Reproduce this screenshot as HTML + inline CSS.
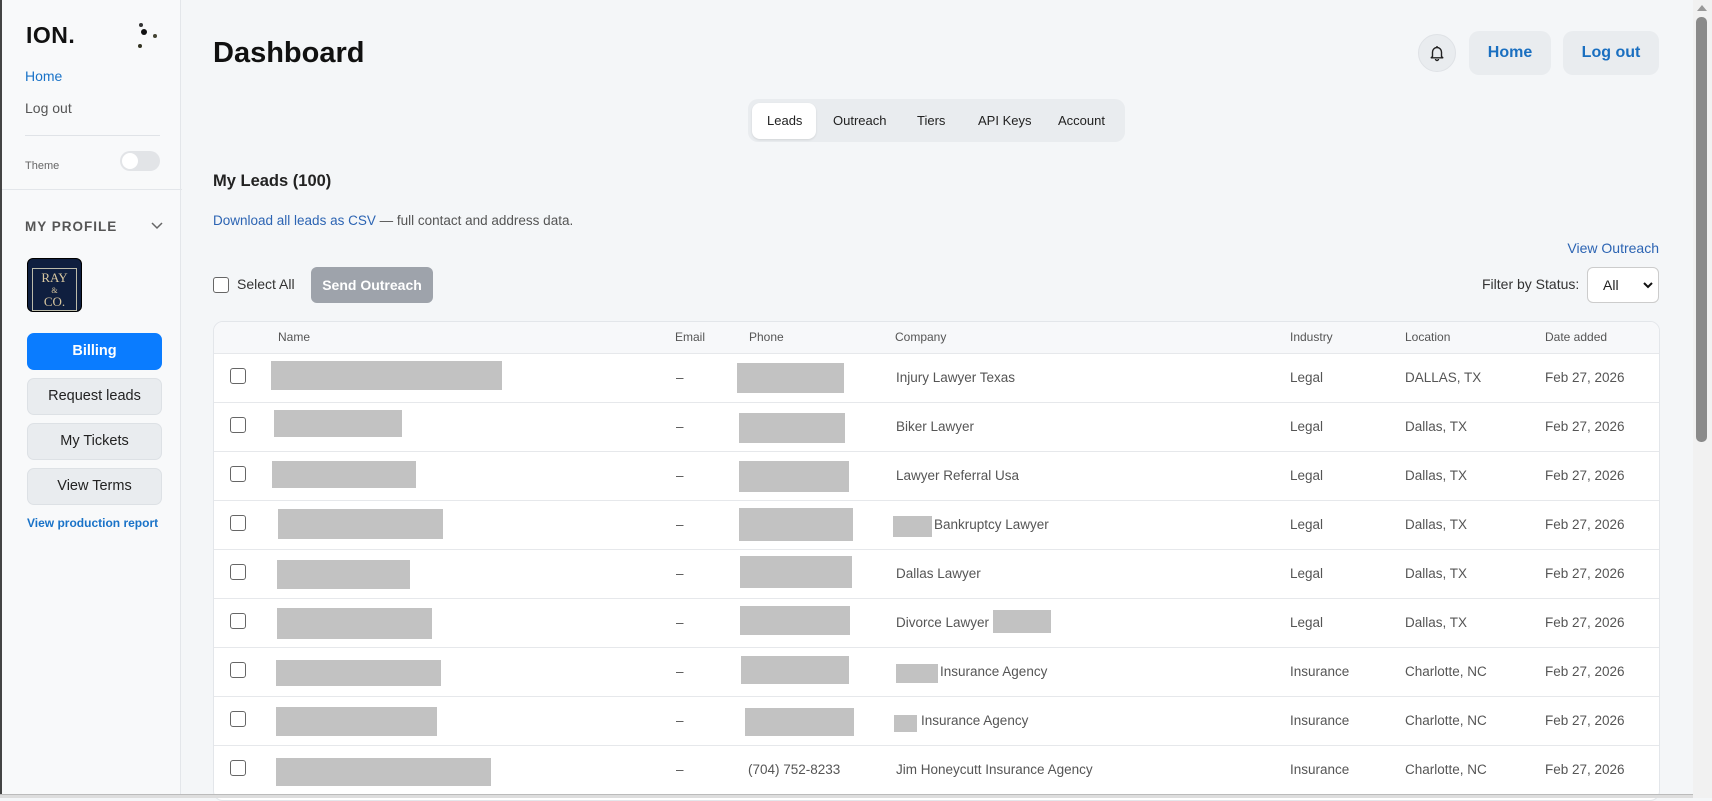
<!DOCTYPE html>
<html><head><meta charset="utf-8"><style>
*{box-sizing:border-box;margin:0;padding:0}
body{width:1712px;height:798px;overflow:hidden;background:#f4f6f8;font-family:"Liberation Sans",sans-serif;position:relative;color:#222}
.a{position:absolute}
.side{left:0;top:0;width:181px;height:798px;background:#f8f9fa;border-right:1px solid #e3e6ea;border-left:2px solid #444}
.sbtn{left:25px;width:135px;height:37px;border-radius:7px;background:#e9ecef;border:1px solid #dde1e5;font-size:14.5px;text-align:center;line-height:35px;color:#222}
.th{top:321px;font-size:12px;color:#555;line-height:33px}
.row{left:214px;width:1445px;height:49px;border-top:1px solid #e6e8eb}
.g{background:#c2c2c2}
.cb{width:16px;height:16px;border:1.5px solid #666;border-radius:3px;background:#fff}
.t{font-size:13.5px;color:#555}
</style></head><body>
<div class="a side">
  <div class="a" style="left:24px;top:22px;font-size:23px;font-weight:900;color:#111;letter-spacing:0.5px">ION.</div>
  <svg class="a" style="left:130px;top:22px" width="32" height="28"><circle cx="9" cy="3" r="2" fill="#333"/><circle cx="12" cy="10" r="3" fill="#111"/><circle cx="23" cy="14" r="2" fill="#443"/><circle cx="8" cy="24" r="2" fill="#332"/></svg>
  <div class="a" style="left:23px;top:68px;font-size:14px;color:#1a73c8">Home</div>
  <div class="a" style="left:23px;top:100px;font-size:14px;color:#555">Log out</div>
  <div class="a" style="left:23px;top:135px;width:135px;height:1px;background:#e0e3e7"></div>
  <div class="a" style="left:23px;top:160px;font-size:11px;color:#666">Theme</div>
  <div class="a" style="left:118px;top:151px;width:40px;height:20px;border-radius:10px;background:#e2e4e7"><div class="a" style="left:2px;top:2px;width:16px;height:16px;border-radius:8px;background:#fff"></div></div>
  <div class="a" style="left:0;top:189px;width:180px;height:1px;background:#e3e6ea"></div>
  <div class="a" style="left:23px;top:219px;font-size:13.5px;font-weight:bold;color:#555;letter-spacing:1px">MY PROFILE</div>
  <svg class="a" style="left:149px;top:222px" width="12" height="8"><path d="M1 1l5 5 5-5" stroke="#666" stroke-width="1.5" fill="none"/></svg>
  <div class="a" style="left:25px;top:258px;width:55px;height:54px;background:#0f1f3f;border-radius:6px;border:1px solid #000;color:#d9c8a0;font-family:'Liberation Serif',serif;font-size:13px;line-height:11px;text-align:center;padding-top:9px"><div style="border:1px solid #bba;margin:0 4px;padding:3px 0">RAY<br><span style="font-size:8px">&amp;</span><br>CO.</div></div>
  <div class="a sbtn" style="top:333px;background:#0a7cff;border-color:#0a7cff;color:#fff;font-weight:bold">Billing</div>
  <div class="a sbtn" style="top:378px">Request leads</div>
  <div class="a sbtn" style="top:423px">My Tickets</div>
  <div class="a sbtn" style="top:468px">View Terms</div>
  <div class="a" style="left:25px;top:516px;font-size:12px;color:#1a73c8;font-weight:bold">View production report</div>
</div>
<div class="a" style="left:213px;top:37px;font-size:29px;font-weight:bold;color:#111">Dashboard</div>
<div class="a" style="left:1418px;top:34px;width:38px;height:38px;border-radius:19px;background:#e9ecef;border:1px solid #dfe2e6"></div>
<svg class="a" style="left:1428px;top:44px" width="18" height="18" viewBox="0 0 18 18"><path d="M4.5 12.5V8a4.5 4.5 0 0 1 9 0v4.5l1.3 1.3H3.2z M7.5 15a1.5 1.5 0 0 0 3 0" stroke="#222" stroke-width="1.4" fill="none" stroke-linejoin="round"/><path d="M9 2v1.5" stroke="#222" stroke-width="1.4"/></svg>
<div class="a" style="left:1469px;top:31px;width:82px;height:44px;border-radius:10px;background:#e9ecef;color:#1a6fc0;font-size:16px;font-weight:bold;text-align:center;line-height:44px">Home</div>
<div class="a" style="left:1563px;top:31px;width:96px;height:44px;border-radius:10px;background:#e9ecef;color:#1a6fc0;font-size:16px;font-weight:bold;text-align:center;line-height:44px">Log out</div>
<div class="a" style="left:748px;top:99px;width:377px;height:43px;border-radius:10px;background:#e9ecef"></div>
<div class="a" style="left:752px;top:103px;width:64px;height:36px;border-radius:8px;background:#fff;box-shadow:0 1px 2px rgba(0,0,0,.1)"></div>
<div class="a" style="top:113px;font-size:13px;color:#222;left:767px">Leads</div>
<div class="a" style="top:113px;font-size:13px;color:#222;left:833px">Outreach</div>
<div class="a" style="top:113px;font-size:13px;color:#222;left:917px">Tiers</div>
<div class="a" style="top:113px;font-size:13px;color:#222;left:978px">API Keys</div>
<div class="a" style="top:113px;font-size:13px;color:#222;left:1058px">Account</div>
<div class="a" style="left:213px;top:172px;font-size:16.5px;font-weight:bold;color:#222">My Leads (100)</div>
<div class="a" style="left:213px;top:213px;font-size:13.5px;color:#555"><span style="color:#2c64b3">Download all leads as CSV</span> — full contact and address data.</div>
<div class="a" style="left:1500px;top:240px;width:159px;text-align:right;font-size:14px;color:#2c64b3">View Outreach</div>
<div class="a cb" style="left:213px;top:277px"></div>
<div class="a" style="left:237px;top:276px;font-size:14px;color:#333">Select All</div>
<div class="a" style="left:311px;top:267px;width:122px;height:36px;border-radius:6px;background:#9ea3ab;color:#fff;font-size:14px;font-weight:bold;text-align:center;line-height:36px">Send Outreach</div>
<div class="a" style="left:1482px;top:276px;font-size:14px;color:#333">Filter by Status:</div>
<div class="a" style="left:1587px;top:267px;width:72px;height:36px;border-radius:6px;background:#fff;border:1px solid #ccc;font-size:14px;line-height:34px;padding-left:15px">All<svg class="a" style="left:55px;top:14px" width="10" height="7"><path d="M1 1l4 4 4-4" stroke="#111" stroke-width="2" fill="none"/></svg></div>
<div class="a" style="left:213px;top:321px;width:1447px;height:480px;background:#fff;border:1px solid #e3e6ea;border-radius:10px;overflow:hidden">
 <div style="height:32px;background:#f7f8fa"></div>
</div>
<div class="a th" style="left:278px">Name</div><div class="a th" style="left:675px">Email</div><div class="a th" style="left:749px">Phone</div><div class="a th" style="left:895px">Company</div><div class="a th" style="left:1290px">Industry</div><div class="a th" style="left:1405px">Location</div><div class="a th" style="left:1545px">Date added</div>

<div class="a row" style="top:353px"></div><div class="a row" style="top:402px"></div><div class="a row" style="top:451px"></div><div class="a row" style="top:500px"></div><div class="a row" style="top:549px"></div><div class="a row" style="top:598px"></div><div class="a row" style="top:647px"></div><div class="a row" style="top:696px"></div><div class="a row" style="top:745px"></div>

<div class="a cb" style="left:230px;top:368px"></div><div class="a cb" style="left:230px;top:417px"></div><div class="a cb" style="left:230px;top:466px"></div><div class="a cb" style="left:230px;top:515px"></div><div class="a cb" style="left:230px;top:564px"></div><div class="a cb" style="left:230px;top:613px"></div><div class="a cb" style="left:230px;top:662px"></div><div class="a cb" style="left:230px;top:711px"></div><div class="a cb" style="left:230px;top:760px"></div>
<div class="a g" style="left:271px;top:361px;width:231px;height:29px"></div>
<div class="a g" style="left:274px;top:410px;width:128px;height:27px"></div>
<div class="a g" style="left:272px;top:461px;width:144px;height:27px"></div>
<div class="a g" style="left:278px;top:509px;width:165px;height:30px"></div>
<div class="a g" style="left:277px;top:560px;width:133px;height:29px"></div>
<div class="a g" style="left:277px;top:608px;width:155px;height:31px"></div>
<div class="a g" style="left:276px;top:660px;width:165px;height:26px"></div>
<div class="a g" style="left:276px;top:707px;width:161px;height:29px"></div>
<div class="a g" style="left:276px;top:758px;width:215px;height:28px"></div>
<div class="a g" style="left:737px;top:363px;width:107px;height:30px"></div>
<div class="a g" style="left:739px;top:413px;width:106px;height:30px"></div>
<div class="a g" style="left:739px;top:461px;width:110px;height:31px"></div>
<div class="a g" style="left:739px;top:508px;width:114px;height:33px"></div>
<div class="a g" style="left:740px;top:556px;width:112px;height:32px"></div>
<div class="a g" style="left:740px;top:606px;width:110px;height:29px"></div>
<div class="a g" style="left:741px;top:656px;width:108px;height:28px"></div>
<div class="a g" style="left:745px;top:708px;width:109px;height:28px"></div>
<div class="a t" style="left:748px;top:762px">(704) 752-8233</div>
<div class="a t" style="left:676px;top:370px">–</div><div class="a t" style="left:676px;top:419px">–</div><div class="a t" style="left:676px;top:468px">–</div><div class="a t" style="left:676px;top:517px">–</div><div class="a t" style="left:676px;top:566px">–</div><div class="a t" style="left:676px;top:615px">–</div><div class="a t" style="left:676px;top:664px">–</div><div class="a t" style="left:676px;top:713px">–</div><div class="a t" style="left:676px;top:762px">–</div>
<div class="a t" style="left:896px;top:370px">Injury Lawyer Texas</div>
<div class="a t" style="left:896px;top:419px">Biker Lawyer</div>
<div class="a t" style="left:896px;top:468px">Lawyer Referral Usa</div>
<div class="a g" style="left:893px;top:516px;width:39px;height:21px"></div><div class="a t" style="left:934px;top:517px">Bankruptcy Lawyer</div>
<div class="a t" style="left:896px;top:566px">Dallas Lawyer</div>
<div class="a t" style="left:896px;top:615px">Divorce Lawyer</div><div class="a g" style="left:993px;top:610px;width:58px;height:23px"></div>
<div class="a g" style="left:896px;top:664px;width:42px;height:19px"></div><div class="a t" style="left:940px;top:664px">Insurance Agency</div>
<div class="a g" style="left:894px;top:715px;width:23px;height:17px"></div><div class="a t" style="left:921px;top:713px">Insurance Agency</div>
<div class="a t" style="left:896px;top:762px">Jim Honeycutt Insurance Agency</div>
<div class="a t" style="left:1290px;top:370px">Legal</div><div class="a t" style="left:1405px;top:370px">DALLAS, TX</div><div class="a t" style="left:1545px;top:370px">Feb 27, 2026</div>
<div class="a t" style="left:1290px;top:419px">Legal</div><div class="a t" style="left:1405px;top:419px">Dallas, TX</div><div class="a t" style="left:1545px;top:419px">Feb 27, 2026</div>
<div class="a t" style="left:1290px;top:468px">Legal</div><div class="a t" style="left:1405px;top:468px">Dallas, TX</div><div class="a t" style="left:1545px;top:468px">Feb 27, 2026</div>
<div class="a t" style="left:1290px;top:517px">Legal</div><div class="a t" style="left:1405px;top:517px">Dallas, TX</div><div class="a t" style="left:1545px;top:517px">Feb 27, 2026</div>
<div class="a t" style="left:1290px;top:566px">Legal</div><div class="a t" style="left:1405px;top:566px">Dallas, TX</div><div class="a t" style="left:1545px;top:566px">Feb 27, 2026</div>
<div class="a t" style="left:1290px;top:615px">Legal</div><div class="a t" style="left:1405px;top:615px">Dallas, TX</div><div class="a t" style="left:1545px;top:615px">Feb 27, 2026</div>
<div class="a t" style="left:1290px;top:664px">Insurance</div><div class="a t" style="left:1405px;top:664px">Charlotte, NC</div><div class="a t" style="left:1545px;top:664px">Feb 27, 2026</div>
<div class="a t" style="left:1290px;top:713px">Insurance</div><div class="a t" style="left:1405px;top:713px">Charlotte, NC</div><div class="a t" style="left:1545px;top:713px">Feb 27, 2026</div>
<div class="a t" style="left:1290px;top:762px">Insurance</div><div class="a t" style="left:1405px;top:762px">Charlotte, NC</div><div class="a t" style="left:1545px;top:762px">Feb 27, 2026</div>
<div class="a" style="left:0;top:794px;width:1712px;height:4px;background:#ddd;border-top:1px solid #bbb"></div>
<div class="a" style="left:1693px;top:0;width:19px;height:798px;background:#f1f1f1"></div>
<div class="a" style="left:1696px;top:17px;width:11px;height:425px;border-radius:5px;background:#8a8a8a"></div>
<svg class="a" style="left:1697px;top:5px" width="10" height="6"><path d="M0 6L5 0L10 6z" fill="#999"/></svg>
</body></html>
